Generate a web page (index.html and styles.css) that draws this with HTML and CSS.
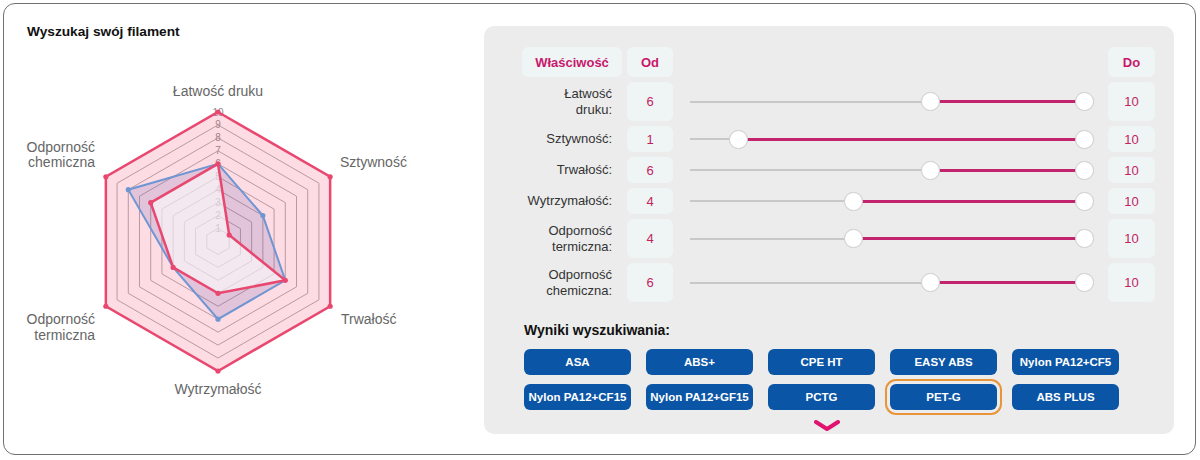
FILE: index.html
```html
<!DOCTYPE html>
<html lang="pl">
<head>
<meta charset="utf-8">
<title>Wyszukaj swój filament</title>
<link rel="stylesheet" href="styles.css">
</head>
<body>
<div class="card">
  <section class="left">
    <h2 class="title">Wyszukaj swój filament</h2>
    <svg class="radar" width="476" height="360" viewBox="4 60 476 360" xmlns="http://www.w3.org/2000/svg">
      <g fill="none" stroke="#aaaaaa" stroke-width="1">
        <polygon vector-effect="non-scaling-stroke" points="0,-1 0.866,-0.5 0.866,0.5 0,1 -0.866,0.5 -0.866,-0.5" transform="translate(218 241.5) scale(12.95)"/>
        <polygon vector-effect="non-scaling-stroke" points="0,-1 0.866,-0.5 0.866,0.5 0,1 -0.866,0.5 -0.866,-0.5" transform="translate(218 241.5) scale(25.9)"/>
        <polygon vector-effect="non-scaling-stroke" points="0,-1 0.866,-0.5 0.866,0.5 0,1 -0.866,0.5 -0.866,-0.5" transform="translate(218 241.5) scale(38.85)"/>
        <polygon vector-effect="non-scaling-stroke" points="0,-1 0.866,-0.5 0.866,0.5 0,1 -0.866,0.5 -0.866,-0.5" transform="translate(218 241.5) scale(51.8)"/>
        <polygon vector-effect="non-scaling-stroke" points="0,-1 0.866,-0.5 0.866,0.5 0,1 -0.866,0.5 -0.866,-0.5" transform="translate(218 241.5) scale(64.75)"/>
        <polygon vector-effect="non-scaling-stroke" points="0,-1 0.866,-0.5 0.866,0.5 0,1 -0.866,0.5 -0.866,-0.5" transform="translate(218 241.5) scale(77.7)"/>
        <polygon vector-effect="non-scaling-stroke" points="0,-1 0.866,-0.5 0.866,0.5 0,1 -0.866,0.5 -0.866,-0.5" transform="translate(218 241.5) scale(90.65)"/>
        <polygon vector-effect="non-scaling-stroke" points="0,-1 0.866,-0.5 0.866,0.5 0,1 -0.866,0.5 -0.866,-0.5" transform="translate(218 241.5) scale(103.6)"/>
        <polygon vector-effect="non-scaling-stroke" points="0,-1 0.866,-0.5 0.866,0.5 0,1 -0.866,0.5 -0.866,-0.5" transform="translate(218 241.5) scale(116.55)"/>
      </g>
      <g class="ticks" text-anchor="middle" dominant-baseline="central">
        <text x="218" y="228.55">1</text>
        <text x="218" y="215.6">2</text>
        <text x="218" y="202.65">3</text>
        <text x="218" y="189.7">4</text>
        <text x="218" y="176.75">5</text>
        <text x="218" y="163.8">6</text>
        <text x="218" y="150.85">7</text>
        <text x="218" y="137.9">8</text>
        <text x="218" y="124.95">9</text>
        <text x="218" y="112">10</text>
      </g>
      <g transform="translate(218 241.5) scale(12.95)">
        <polygon points="0,-10 8.66,-5 8.66,5 0,10 -8.66,5 -8.66,-5" fill="rgba(250,95,130,0.22)" stroke="none"/>
        <polygon points="0,-6 3.464,-2 5.196,3 0,6 -3.464,2 -6.928,-4" fill="rgba(95,90,170,0.18)" stroke="none"/>
        <polygon points="0,-6 0.866,-0.5 5.196,3 0,4 -3.464,2 -5.196,-3" fill="rgba(255,255,255,0.6)" stroke="none"/>
        <polygon vector-effect="non-scaling-stroke" points="0,-6 3.464,-2 5.196,3 0,6 -3.464,2 -6.928,-4" fill="none" stroke="#6f96d3" stroke-width="2"/>
        <polygon vector-effect="non-scaling-stroke" points="0,-10 8.66,-5 8.66,5 0,10 -8.66,5 -8.66,-5" fill="none" stroke="#e8476f" stroke-width="2.5"/>
        <polygon vector-effect="non-scaling-stroke" points="0,-6 0.866,-0.5 5.196,3 0,4 -3.464,2 -5.196,-3" fill="none" stroke="#e8476f" stroke-width="2.5"/>
        <g fill="#6f96d3">
          <circle cx="3.464" cy="-2" r="0.2"/>
          <circle cx="0" cy="6" r="0.2"/>
          <circle cx="-6.928" cy="-4" r="0.2"/>
        </g>
        <g fill="#e8476f">
          <circle cx="0" cy="-10" r="0.2"/>
          <circle cx="8.66" cy="-5" r="0.2"/>
          <circle cx="8.66" cy="5" r="0.2"/>
          <circle cx="0" cy="10" r="0.2"/>
          <circle cx="-8.66" cy="5" r="0.2"/>
          <circle cx="-8.66" cy="-5" r="0.2"/>
          <circle cx="0" cy="-6" r="0.2"/>
          <circle cx="0.866" cy="-0.5" r="0.2"/>
          <circle cx="5.196" cy="3" r="0.2"/>
          <circle cx="0" cy="4" r="0.2"/>
          <circle cx="-3.464" cy="2" r="0.2"/>
          <circle cx="-5.196" cy="-3" r="0.2"/>
        </g>
      </g>
      <g class="axis-labels">
        <text x="218" y="96" text-anchor="middle">Łatwość druku</text>
        <text x="340" y="167" text-anchor="start">Sztywność</text>
        <text x="341" y="324" text-anchor="start">Trwałość</text>
        <text x="218" y="394" text-anchor="middle">Wytrzymałość</text>
        <text x="95" y="324" text-anchor="end">Odporność</text>
        <text x="95" y="340" text-anchor="end">termiczna</text>
        <text x="95" y="152" text-anchor="end">Odporność</text>
        <text x="95" y="167" text-anchor="end">chemiczna</text>
      </g>
    </svg>
  </section>

  <section class="panel">
    <div class="grid">
      <div class="head">Właściwość</div>
      <div class="head">Od</div>
      <div class="spacer"></div>
      <div class="head">Do</div>

      <div class="label tall">Łatwość<br>druku:</div>
      <div class="val tall">6</div>
      <div class="slider tall"><span class="track"></span><span class="range" style="left:240.5px;width:154px"></span><span class="thumb" style="left:231px"></span><span class="thumb" style="left:385px"></span></div>
      <div class="val tall">10</div>

      <div class="label">Sztywność:</div>
      <div class="val">1</div>
      <div class="slider"><span class="track"></span><span class="range" style="left:48px;width:346.5px"></span><span class="thumb" style="left:38.5px"></span><span class="thumb" style="left:385px"></span></div>
      <div class="val">10</div>

      <div class="label">Trwałość:</div>
      <div class="val">6</div>
      <div class="slider"><span class="track"></span><span class="range" style="left:240.5px;width:154px"></span><span class="thumb" style="left:231px"></span><span class="thumb" style="left:385px"></span></div>
      <div class="val">10</div>

      <div class="label">Wytrzymałość:</div>
      <div class="val">4</div>
      <div class="slider"><span class="track"></span><span class="range" style="left:163.5px;width:231px"></span><span class="thumb" style="left:154px"></span><span class="thumb" style="left:385px"></span></div>
      <div class="val">10</div>

      <div class="label tall">Odporność<br>termiczna:</div>
      <div class="val tall">4</div>
      <div class="slider tall"><span class="track"></span><span class="range" style="left:163.5px;width:231px"></span><span class="thumb" style="left:154px"></span><span class="thumb" style="left:385px"></span></div>
      <div class="val tall">10</div>

      <div class="label tall">Odporność<br>chemiczna:</div>
      <div class="val tall">6</div>
      <div class="slider tall"><span class="track"></span><span class="range" style="left:240.5px;width:154px"></span><span class="thumb" style="left:231px"></span><span class="thumb" style="left:385px"></span></div>
      <div class="val tall">10</div>
    </div>

    <div class="results">
      <h3 class="results-title">Wyniki wyszukiwania:</h3>
      <div class="buttons">
        <button class="btn">ASA</button>
        <button class="btn">ABS+</button>
        <button class="btn">CPE HT</button>
        <button class="btn">EASY ABS</button>
        <button class="btn">Nylon PA12+CF5</button>
        <button class="btn">Nylon PA12+CF15</button>
        <button class="btn">Nylon PA12+GF15</button>
        <button class="btn">PCTG</button>
        <button class="btn active">PET-G</button>
        <button class="btn">ABS PLUS</button>
      </div>
      <div class="more">
        <svg width="26" height="12" viewBox="0 0 26 12" xmlns="http://www.w3.org/2000/svg"><polyline points="2,2 13,9 24,2" fill="none" stroke="#e0136e" stroke-width="4" stroke-linecap="round" stroke-linejoin="round"/></svg>
      </div>
    </div>
  </section>
</div>
</body>
</html>
```

FILE: styles.css
```css
* { box-sizing: border-box; }
html, body { margin: 0; padding: 0; background: #ffffff; }
body {
  font-family: "Liberation Sans", Arial, sans-serif;
  color: #333;
  width: 1200px;
  height: 460px;
  overflow: hidden;
}
.card {
  margin: 3px 0 0 3px;
  width: 1193px;
  height: 452px;
  border: 1px solid #707070;
  border-radius: 12px;
  display: flex;
  align-items: flex-start;
}
.left {
  width: 480px;
  flex: none;
}
.title {
  margin: 20px 0 0 23px;
  font-size: 13.7px;
  line-height: 16px;
  font-weight: bold;
  color: #111;
}
.radar {
  display: block;
  margin-top: 20px;
}
.ticks text {
  font-family: "Liberation Sans", Arial, sans-serif;
  font-size: 10px;
  fill: #8a8a8a;
}
.axis-labels text {
  font-family: "Liberation Sans", Arial, sans-serif;
  font-size: 14px;
  fill: #666;
}
.panel {
  margin-top: 22px;
  width: 690px;
  height: 408px;
  background: #ececec;
  border-radius: 10px;
  padding: 21px 0 0 38px;
  flex: none;
}
.grid {
  display: grid;
  grid-template-columns: 100px 46px 425px 47px;
  grid-template-rows: 30px 39px 26px 26px 26px 39px 39px;
  column-gap: 5px;
  row-gap: 5px;
}
.grid > .tall { height: 39px; }
.head {
  background: #eff5f5;
  border-radius: 6px;
  color: #c8186c;
  font-weight: bold;
  font-size: 13px;
  display: flex;
  align-items: center;
  justify-content: center;
}
.label {
  font-size: 13px;
  line-height: 16px;
  color: #333;
  text-align: right;
  padding-right: 10px;
  display: flex;
  align-items: center;
  justify-content: flex-end;
}
.val {
  background: #eff5f5;
  border-radius: 6px;
  color: #c0245f;
  font-size: 13px;
  display: flex;
  align-items: center;
  justify-content: center;
}
.slider {
  position: relative;
  width: 404px;
  margin-left: 12px;
}
.track {
  position: absolute;
  left: 0;
  right: 0;
  top: 50%;
  height: 2px;
  margin-top: -1px;
  background: #c8c8c8;
}
.range {
  position: absolute;
  top: 50%;
  height: 3px;
  margin-top: -1.5px;
  background: #c2246e;
}
.thumb {
  position: absolute;
  top: 50%;
  width: 19px;
  height: 19px;
  margin-top: -9.5px;
  border-radius: 50%;
  background: #ffffff;
  border: 1px solid #d2d2d2;
  box-shadow: 0 0 1px rgba(0,0,0,0.08);
}
.results {
  padding-left: 2px;
  margin-top: 20px;
}
.results-title {
  margin: 0;
  font-size: 14px;
  line-height: 16px;
  font-weight: bold;
  color: #111;
}
.buttons {
  margin-top: 11px;
  display: grid;
  grid-template-columns: repeat(5, 107px);
  column-gap: 15px;
  row-gap: 9px;
}
.btn {
  height: 26px;
  border: none;
  border-radius: 6px;
  background: #0b55a6;
  color: #fff;
  font-family: "Liberation Sans", Arial, sans-serif;
  font-weight: bold;
  font-size: 11.5px;
  padding: 0;
  white-space: nowrap;
}
.btn.active {
  outline: 2px solid #e8953a;
  outline-offset: 3px;
  border-radius: 6px;
}
.more {
  width: 585px;
  display: flex;
  justify-content: center;
  margin-top: 10px;
  padding-left: 20px;
}
.more svg { display: block; }
```
